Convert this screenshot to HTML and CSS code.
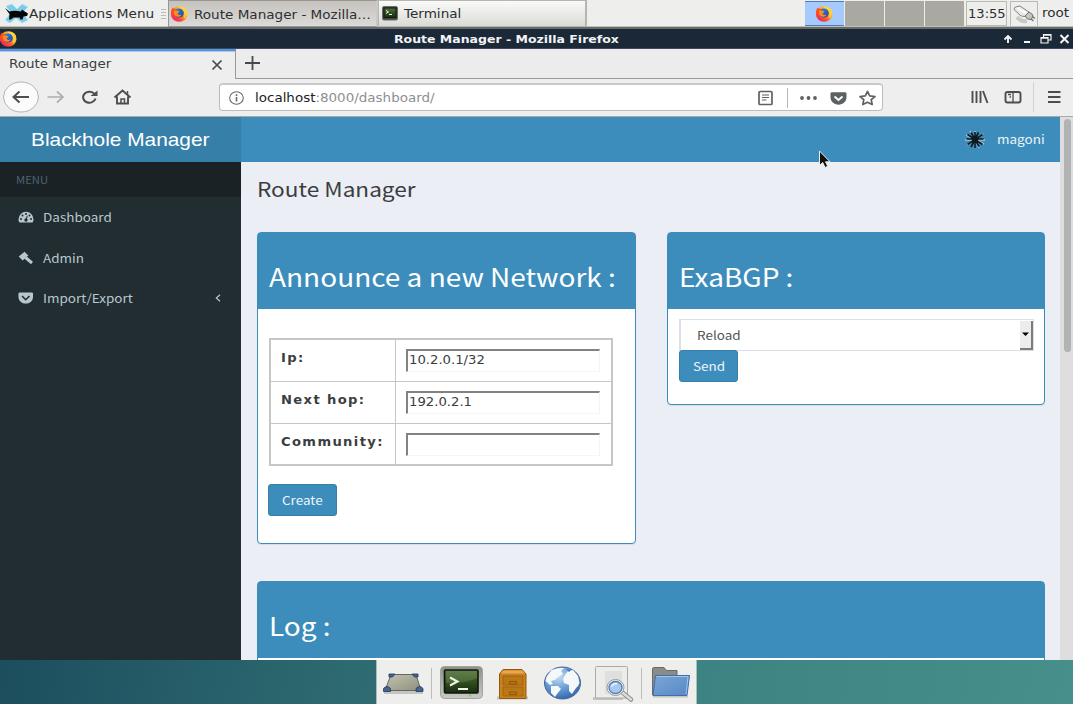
FILE: index.html
```
<!DOCTYPE html>
<html lang="en">
<head>
<meta charset="utf-8">
<title>Route Manager</title>
<link rel="stylesheet" href="styles.css">
</head>
<body>
<svg class="defs" width="0" height="0">
  <defs>
    <linearGradient id="fxo" x1="1" y1="0" x2="0.1" y2="1"><stop offset="0" stop-color="#fff04a"/><stop offset=".4" stop-color="#ffa51f"/><stop offset=".7" stop-color="#ff4a2d"/><stop offset="1" stop-color="#e0107c"/></linearGradient>
    <linearGradient id="fxb" x1="0" y1="0" x2="1" y2="1"><stop offset="0" stop-color="#1b8ff0"/><stop offset="1" stop-color="#2a3fa8"/></linearGradient>
    <linearGradient id="scr" x1="0" y1="0" x2="0" y2="1"><stop offset="0" stop-color="#53733a"/><stop offset=".5" stop-color="#32511f"/><stop offset="1" stop-color="#182c13"/></linearGradient>
    <linearGradient id="case" x1="0" y1="0" x2="0" y2="1"><stop offset="0" stop-color="#8d8f8a"/><stop offset="1" stop-color="#c9cac6"/></linearGradient>
    <linearGradient id="desk" x1="0" y1="0" x2="1" y2="1"><stop offset="0" stop-color="#c2c3b2"/><stop offset="1" stop-color="#8e907d"/></linearGradient>
    <radialGradient id="globe" cx=".4" cy=".3" r=".75"><stop offset="0" stop-color="#c8dcf2"/><stop offset=".5" stop-color="#6c9fd6"/><stop offset="1" stop-color="#2e62a8"/></radialGradient>
    <linearGradient id="fold" x1="0" y1="0" x2="1" y2="1"><stop offset="0" stop-color="#7ba7d9"/><stop offset="1" stop-color="#5688c4"/></linearGradient>
    <symbol id="firefox" viewBox="0 0 18 16">
      <ellipse cx="9.2" cy="8" rx="8.3" ry="7.7" fill="url(#fxo)"/>
      <path d="M1 7C1 4 2 2 3 1.400L4 3.300C5.500 2.500 7 3 8 4L6 7Z" fill="#ff4b22"/>
      <ellipse cx="9" cy="7" rx="4.800" ry="4.500" fill="url(#fxb)"/>
      <path d="M4 4.600C6.500 3.500 8 5 9.500 5.300C9 7 7.500 6.700 7.700 7.800C8.200 9.500 10.500 9 11.500 8.500C10.500 11.700 5 11.800 4 7.500Z" fill="#ff8a1d"/>
      <path d="M8.500 1.300C11 0 15 1 16.800 4.500C17.500 9 15.500 12 13.500 13C15.500 9 14.500 5 12 3.300C11 2.300 9.800 2.500 8.500 1.300Z" fill="#ffd43a"/>
    </symbol>
    <symbol id="pocket" viewBox="0 0 18 14">
      <path d="M2 .5H16Q17.500 .5 17.500 2V5.500C17.500 10.500 13.500 13.500 9 13.500S.5 10.500 .5 5.500V2Q.5 .5 2 .5Z" fill="currentColor"/>
    </symbol>
  </defs>
</svg>

<header class="taskbar">
  <div class="appmenu">
    <svg class="mouse" width="25" height="21" viewBox="0 0 25 21"><path d="M2 3L8 1L13 6L18 1L24 4L18 10L24 17L18 20L12 15L6 20L1 17L7 10Z" fill="#79cdea" stroke="#b5e3f2" stroke-width=".8"/><path d="M1 5L5.500 8.500Q11 7 17 8.500L18 6.500L20 8L24 10.500L23 13L19.500 13.500L18.500 16.500H16.500L15.500 14.500H9.500L7 16.500H5L5.500 11Z" fill="#050505"/></svg>
    <span class="dv dv-menu">Applications Menu</span>
    <i class="grip"></i>
  </div>
  <div class="task active"><svg class="fx" width="18" height="16"><use href="#firefox"/></svg><span class="dv">Route Manager - Mozilla…</span></div>
  <div class="task second"><svg width="16" height="15" viewBox="0 0 16 15"><rect x=".5" y=".5" width="15" height="13.500" rx="1.500" fill="#42453f" stroke="#6a6c67"/><rect x="2" y="2" width="12" height="9.500" fill="url(#scr)" stroke="#15180f"/><path d="M4 4.500L6.500 6L4 7.500M7 8.500H10" fill="none" stroke="#f1f5e9"/></svg><span class="dv">Terminal</span></div>
  <div class="pager"><b><svg width="18" height="16"><use href="#firefox"/></svg></b><b></b><b></b><b></b></div>
  <div class="clock"><span class="dv dv-narrow">13:55</span></div>
  <div class="tray"><svg width="24" height="22" viewBox="0 0 24 22"><path d="M5 13Q9 18 15 17" stroke="#c9c9c5" stroke-width="4" fill="none"/><path d="M2 5.500Q2 3 5 2.500L8 2L17 8L13 12.500L9 12Z" fill="#e9e9e6" stroke="#858582"/><path d="M5 4L14 9" stroke="#fff" stroke-width="1.800"/><path d="M13 12L17 8L21 11L19.500 15.500L15.500 15Z" fill="#c4c4c0" stroke="#6e6e6b"/><path d="M19 15L21.500 17M20.500 12.500L23 14.500" stroke="#777" stroke-width="1.500"/></svg></div>
  <span class="dv user">root</span>
</header>

<div class="titlebar">
  <svg class="fxt" width="18" height="16"><use href="#firefox"/></svg>
  <span class="dv dv-title">Route Manager - Mozilla Firefox</span>
  <svg class="winbtns" width="70" height="14" viewBox="0 0 70 14" fill="none" stroke="#f4f4f4"><path d="M8 11V4M4.500 7.500L8 4L11.500 7.500" stroke-width="1.900"/><path d="M24 10H30" stroke-width="2"/><path d="M41 5.500H48V11H41ZM43.500 5V2.500H51V8H48.500" stroke-width="1.200"/><path d="M41 6H48M43.500 3H51" stroke-width="1.500"/><path d="M60.500 3L68.500 11M68.500 3L60.500 11" stroke-width="2"/></svg>
</div>

<div class="tabs">
  <div class="tab"><span class="dv dv-tab">Route Manager</span><svg width="12" height="12" viewBox="0 0 12 12"><path d="M1.500 1.500L10.500 10.500M10.500 1.500L1.500 10.500" stroke="#474b4e" stroke-width="1.700"/></svg></div>
  <div class="tabrest"><svg width="16" height="14" viewBox="0 0 16 14"><path d="M7.500 0V14M0 7H15" stroke="#45494c" stroke-width="1.800"/></svg></div>
</div>

<div class="toolbar">
  <svg class="nav" width="140" height="36" viewBox="0 0 140 36" fill="none" stroke="#4a4e51" stroke-width="2">
    <ellipse cx="21" cy="18" rx="17.500" ry="15" fill="#fbfbfb" stroke="#b4b4b4" stroke-width="1"/>
    <path d="M29 18H14M19.500 12.500L13.500 18L19.500 23.500"/>
    <path d="M47.500 18H62M57 12.500L63 18L57 23.500" stroke="#adafb0" stroke-width="1.700"/>
    <path d="M95.500 19.500A6.300 5.500 0 1 1 94 14.500"/><path d="M97.500 11.500V17H90.500Z" fill="#4a4e51" stroke="none"/>
    <path d="M114.500 18.500L122.500 11.500L130.500 18.500M117 17.500V24.500H128V17.500" stroke-width="1.900"/><path d="M121 24V20H124.500V24" stroke-width="1.500"/><path d="M127.500 12V15" stroke-width="1.500"/>
  </svg>
  <div class="urlbar">
    <svg width="15" height="14" viewBox="0 0 15 14" fill="none" stroke="#66696b"><ellipse cx="7.500" cy="7" rx="6.800" ry="6.200" stroke-width="1.100"/><path d="M7.500 6V10.500M7.500 3.300V4.900" stroke-width="1.600"/></svg>
    <span class="dv url"><em>localhost</em>:8000/dashboard/</span>
    <svg class="urlicons" width="122" height="22" viewBox="0 0 122 22" fill="none" stroke="#5e6163"><rect x="3" y="4.500" width="13" height="13" rx="1" stroke-width="1.700"/><path d="M6 8H13M6 10.500H13M6 13H10.500" stroke-width="1.100"/><path d="M31.500 1V21" stroke="#b7b7b7"/><g fill="#5e6163" stroke="none"><circle cx="46" cy="11" r="1.900"/><circle cx="52.500" cy="11" r="1.900"/><circle cx="59" cy="11" r="1.900"/></g><svg x="74" y="4.500" width="17" height="14" color="#5e6163" stroke="none"><use href="#pocket"/></svg><path d="M78.500 9.500L82.500 13L86.500 9.500" stroke="#fff" stroke-width="1.900"/><path d="M111.500 4.500L113.700 8.800L119 9.500L115.200 12.700L116.200 17.500L111.500 15.200L106.800 17.500L107.800 12.700L104 9.500L109.300 8.800Z" stroke-width="1.700" stroke-linejoin="round"/></svg>
  </div>
  <svg class="rightbtns" width="100" height="36" viewBox="0 0 100 36" fill="none" stroke="#4a4e51"><path d="M3.500 12V24M7.500 12V24M11.500 12V24M14 12L18.500 24" stroke-width="1.900"/><rect x="36.500" y="13" width="15" height="10.500" rx="2" stroke-width="1.900"/><path d="M44 13V23.500M39 15.500H42M40.500 18H42" stroke-width="1.300"/><path d="M64.500 3V33" stroke="#d2d2d2"/><path d="M79 13H91.500M79 18H91.500M79 23H91.500" stroke-width="1.800"/></svg>
</div>

<main class="page">
  <aside class="sidebar">
    <div class="logo"><span>Blackhole Manager</span></div>
    <div class="menuhead"><span class="ss ss-small">MENU</span></div>
    <a class="item"><svg width="16" height="12" viewBox="0 0 16 12"><path d="M.5 8.500A7.500 7.700 0 0 1 15.500 8.500Q15.500 10.300 14.500 11.500H1.500Q.5 10.300 .5 8.500Z" fill="#b8c7ce"/><g fill="#222d32"><circle cx="3" cy="8" r="1"/><circle cx="4.500" cy="4.500" r="1"/><circle cx="8" cy="3" r="1"/><circle cx="11.500" cy="4.500" r="1"/><circle cx="13" cy="8" r="1"/><circle cx="8" cy="9" r="1.700"/></g><path d="M8 9L9.300 4.800" stroke="#222d32"/></svg><span class="ss">Dashboard</span></a>
    <a class="item"><svg width="16" height="14" viewBox="0 0 16 14"><path d="M.7 5.500L6.500 .8L10.300 4.500L4.700 9.500Z" fill="#b8c7ce"/><path d="M7.500 6.500L14 12" stroke="#b8c7ce" stroke-width="3"/></svg><span class="ss">Admin</span></a>
    <a class="item"><svg width="16" height="12" viewBox="0 0 16 12"><svg width="15.500" height="12" color="#b8c7ce"><use href="#pocket"/></svg><path d="M4 4L7.700 7.700L11.500 4" fill="none" stroke="#222d32" stroke-width="1.600"/></svg><span class="ss">Import/Export</span><svg class="chev" width="6" height="8" viewBox="0 0 6 8"><path d="M5 .7L1.300 4L5 7.300" fill="none" stroke="#b8c7ce" stroke-width="1.200"/></svg></a>
  </aside>
  <section class="content">
    <div class="navbar">
      <svg width="22" height="19" viewBox="0 0 22 19"><g stroke="#a9c3d2" stroke-width="1.600"><path d="M2 5L20 14M6 1L15 18M19 4L3 15M1 10H21M11 1V18"/></g><g stroke="#0c1a22" stroke-width="1.700"><path d="M3.500 4.500L18.500 14.500M7 2.500L15 16.500M18.500 4.500L3.500 14.500M2.500 9H19.500M11 2V18M14.500 2.500L7 17"/></g><circle cx="11" cy="9.500" r="3" fill="#0c1a22"/></svg>
      <span class="ss">magoni</span>
    </div>
    <div class="body">
      <h1><span class="ss">Route Manager</span></h1>
      <div class="row">
        <div class="panel announce">
          <div class="phead"><span class="ss">Announce a new Network :</span></div>
          <div class="pbody">
            <div class="form">
              <div class="cell label"><span>Ip:</span></div><div class="cell"><div class="inp"><span class="dv dv-in">10.2.0.1/32</span></div></div>
              <div class="cell label"><span>Next hop:</span></div><div class="cell"><div class="inp"><span class="dv dv-in">192.0.2.1</span></div></div>
              <div class="cell label"><span>Community:</span></div><div class="cell"><div class="inp"></div></div>
            </div>
            <button class="btn create"><span class="ss">Create</span></button>
          </div>
        </div>
        <div class="panel exabgp">
          <div class="phead"><span class="ss">ExaBGP :</span></div>
          <div class="pbody">
            <div class="select"><span class="ss">Reload</span><i><svg width="7" height="4" viewBox="0 0 7 4"><path d="M0 .5H7L3.500 4Z" fill="#000"/></svg></i></div>
            <button class="btn send"><span class="ss">Send</span></button>
          </div>
        </div>
      </div>
      <div class="panel log"><div class="phead"><span class="ss">Log :</span></div></div>
    </div>
  </section>
  <div class="scroll"><i></i></div>
</main>

<footer class="desktop">
  <div class="dock">
    <svg width="320" height="44" viewBox="0 0 320 44">
      <path d="M7 32.500H46" stroke="#c4c4c2" stroke-width="3"/>
      <path d="M14 14.500H39L44 30.500H8Z" fill="url(#desk)" stroke="#66685c"/><g fill="#46628f" stroke="#27375a" stroke-width=".8"><path d="M12 17V14H18L15.500 17ZM35 14H41V17H37.500Z"/><path d="M6.500 31.500V28.500Q10 24.500 13.500 28.500V31.500ZM39 31.500V28.500Q42.500 24.500 46 28.500V31.500Z"/></g>
      <path d="M54.500 8V39M264.500 8V39" stroke="#bcbcb9"/>
      <rect x="63.500" y="6.500" width="42" height="32" rx="4" fill="url(#case)" stroke="#a2a39f"/><rect x="67.500" y="10" width="33.500" height="23" rx="1" fill="url(#scr)" stroke="#10160c" stroke-width="1.600"/><path d="M69 11H100V18Q88 24 69 23Z" fill="#7b9864" opacity=".35"/><path d="M73 17.500L80.500 21.500L73 25.500M81 29H91" fill="none" stroke="#eef4e6" stroke-width="2"/><circle cx="93" cy="35.500" r="1.200" fill="#82d53e"/>
      <path d="M120 38H151" stroke="#c6c6c4" stroke-width="3"/><path d="M122.500 14L126 9.500H145L149 14V38.500H122.500Z" fill="#c98222" stroke="#935908"/><path d="M123.500 13.500L126.500 10.500H145L148 13.500Z" fill="#eba653"/><path d="M126 16H146V25H126ZM126 27H146V36H126Z" fill="#bb7716" stroke="#a4650d"/><path d="M132.500 24V21.500H139.500V24H132.500M132.500 34.500V32H139.500V34.500H132.500" fill="none" stroke="#8b5409"/>
      <ellipse cx="185.500" cy="23" rx="18" ry="16" fill="url(#globe)" stroke="#47659a"/><g fill="#f5f8fb"><path d="M169.500 17L174.500 10L182 8L187 8L184 11L186 14L181 17L178 20L174 21L176 24L173 25L168.500 21Z"/><path d="M174 26L181 26L184 29L180 34L178 37L174 33Z"/><path d="M188 15L191 11L196 10L201 16L202.500 23L201 26L199 28L195 34L192 31L192 25L187 23L186 19Z"/></g><path d="M189 9L194 10L192 12Z" fill="#3e71b4"/>
      <path d="M216 38.500H246" stroke="#c4c4c2" stroke-width="3"/><rect x="218.500" y="6.500" width="32" height="31.500" rx="1" fill="#ececea" stroke="#aaaaa8"/><path d="M228 11H245V34H228Z" fill="#dfdfdd"/><path d="M246 33L254 39.500" stroke="#8e908f" stroke-width="4.500" stroke-linecap="round"/><path d="M246 33L254 39.500" stroke="#dcdcda" stroke-width="2.500" stroke-linecap="round"/><ellipse cx="238.500" cy="27.500" rx="8.500" ry="8" fill="#eff1f2" stroke="#969997"/><ellipse cx="238.500" cy="27.500" rx="6.500" ry="6" fill="#a9c8ea" stroke="#5480ba" stroke-width="1.400"/><path d="M234.500 26.500Q236 23.500 240 23.500" fill="none" stroke="#eaf4ff" stroke-width="1.500"/>
      <path d="M275.500 33V9Q275.500 7.500 277 7.500H287L289.500 10.500H300V17H281L278 35H275.500Z" fill="#8a8c89" stroke="#696b68"/><path d="M276 36.500H311" stroke="#c4c4c2" stroke-width="2"/><path d="M278.500 15.500H312.500L310 35.500H276Z" fill="url(#fold)" stroke="#3f6ea8"/><path d="M279.500 16.500H311L309 34.500" fill="none" stroke="#a3c3e8"/>
    </svg>
  </div>
</footer>

<svg class="pointer" width="14" height="20" viewBox="0 0 14 20"><path d="M1.500 1V15.500L4.700 12.500L7 17.500L9.800 16.300L7.500 11.800H12Z" fill="#111" stroke="#e8eef2" stroke-width="1"/></svg>
</body>
</html>
```
FILE: styles.css
```
* { box-sizing: border-box; }
body { margin: 0; width: 1073px; height: 704px; overflow: hidden; display: flex; flex-direction: column; background: #ececec; font: 12px/16px "DejaVu Sans", sans-serif; color: #3a3e40; }
.defs { position: absolute; }
svg { display: block; flex: none; }

/* Wide text: every face is stretched horizontally from its left edge */
.dv, .ss { display: inline-block; white-space: pre; transform-origin: 0 50%; transform: scaleX(1.13); }
.ss { font-family: "Noto Sans CJK SC", "Noto Sans", sans-serif; font-size: 12px; transform: scaleX(1.125); }

.taskbar { height: 29px; flex: none; display: flex; align-items: flex-start; background: #eeeeec; border-bottom: 2px solid #666b69; box-shadow: inset 0 -1px #bfc0ba; color: #2c2f30; }
.appmenu { width: 168px; height: 27px; display: flex; align-items: center; padding-left: 4px; }
.mouse { margin-right: 0; }
.dv-menu { font-size: 12.3px; width: 132px; transform: scaleX(1.11); }
.grip { width: 5px; height: 10px; background: repeating-linear-gradient(#b9b9b5 0 1px, transparent 1px 3px); }
.task { height: 27px; display: flex; align-items: center; border: 1px solid #b5b6b0; background: linear-gradient(#fafaf9, #dadbd5); }
.task.active { width: 210px; padding-left: 1px; background: linear-gradient(#c5c2be, #dcdad8); border: 1px solid #979692; border-right: 2px solid #c9c9c5; }
.task.active .dv { margin: 2px 0 0 6px; }
.task.second { width: 209px; padding-left: 3px; border-right: 2px solid #b5b6b0; }
.task.second .dv { margin-left: 6px; }
.pager { display: flex; gap: 1px; margin: 1px 0 0 218px; }
.pager b { width: 39px; height: 25px; background: #a9a9a1; display: flex; align-items: center; justify-content: center; }
.pager b:first-child { background: #a6cafb; border: solid #4a7dc0; border-width: 1px 0; }
.pager svg { margin-left: -2px; }
.clock { width: 41px; height: 25px; margin: 1px 0 0 2px; border: 1px solid #b9bab3; padding: 4px 0 0 1px; }
.dv-narrow { transform: scaleX(1.09); }
.tray { width: 28px; height: 26px; margin: 1px 0 0 3px; border: 1px solid #b9bab3; padding: 2px 1px; }
.user { margin: 5px 0 0 4px; }

.titlebar { height: 20px; flex: none; display: flex; align-items: center; background: #1b2838; color: #f2f3f4; border-bottom: 1px solid #41495a; }
.fxt { margin: 1px 0 0 -1px; }
.dv-title { font-weight: bold; font-size: 11px; width: 586px; margin: 3px 0 0 377px; transform: scaleX(1.135); }
.winbtns { margin: 1px 0 0 20px; }

.tabs { height: 30px; flex: none; display: flex; }
.tab { width: 236px; border-top: 2px solid #5294dd; border-right: 1px solid #999; background: #eeeeee; display: flex; align-items: center; padding: 0 12px 2px 9px; justify-content: space-between; box-shadow: inset 0 1px #a9c9ec; }
.tab svg { margin-top: 1px; }
.dv-tab { transform: scaleX(1.12); }
.tabrest { flex: 1; border-bottom: 1px solid #999; padding: 7px 0 0 9px; }

.toolbar { height: 38px; flex: none; display: flex; align-items: center; background: #eeeeee; border-bottom: 1px solid #a9a9a9; padding-bottom: 1px; }
.nav { margin-right: 79px; }
.urlbar { width: 664px; height: 28px; display: flex; align-items: center; background: #fff; border: 1px solid #bcbcbc; border-top: 2px solid #cacaca; border-radius: 4px; padding-left: 9px; }
.url { width: 494px; margin-left: 11px; color: #8d8f90; transform: scaleX(1.122); }
.url em { font-style: normal; color: #202324; }
.urlicons { margin-left: 7px; }
.rightbtns { margin-left: 86px; }

.page { height: 543px; flex: none; display: flex; background: #ecf0f5; }
.sidebar { width: 241px; background: #222d32; color: #b8c7ce; }
.logo { height: 45px; background: #367fa9; color: #fff; padding: 11px 0 0 31px; font: 18.500px/24px "Liberation Sans", Arial, sans-serif; }
.logo span { display: inline-block; white-space: pre; transform: scaleX(1.127); transform-origin: 0 50%; }
.menuhead { height: 35px; background: #1a2226; color: #4b646f; padding: 10px 0 0 16px; }
.ss-small { font-size: 10px; }
.item { height: 40.4px; display: flex; align-items: center; padding-left: 18px; }
.item .ss { margin-left: 9px; }
.chev { margin-left: 92px; }
.content { width: 819px; display: flex; flex-direction: column; background: #ebeef4; }
.navbar { height: 45px; flex: none; background: #3c8dbc; color: #ecf3f8; display: flex; align-items: center; padding-left: 723px; }
.navbar .ss { margin: -1px 0 0 11px; }
.body { flex: 1; overflow: hidden; padding: 0 15px 0 16px; }
h1 { margin: 0; height: 70px; padding-top: 14px; font-weight: 400; line-height: 26px; color: #3a3d40; }
h1 .ss { font-size: 20px; transform: scaleX(1.13); }
.row { display: flex; gap: 31px; align-items: flex-start; height: 349px; }
.panel { flex: none; background: #fff; border: 1px solid #3c8dbc; border-radius: 4px; box-shadow: 0 1px 1px rgba(0,0,0,.08); width: 378px; }
.announce { height: 312px; width: 379px; }
.exabgp { height: 173px; width: 378px; }
.log { width: 788px; height: 90px; }
.phead { height: 76px; background: #3c8dbc; color: #fff; padding: 25px 0 0 11px; line-height: 36px; }
.phead .ss { font-size: 25px; transform: scaleX(1.12); }
.pbody { padding: 29px 10px 0; }
.form { width: 344px; height: 128px; display: grid; grid-template-columns: 124px 1fr; grid-template-rows: 41px 41px 1fr; gap: 1px; padding: 2px; background: #c6c6c6; margin-left: 1px; }
.cell { background: #fff; padding: 9px 0 0 10px; }
.label span { display: inline-block; white-space: pre; transform: scaleX(1.14); transform-origin: 0 50%; font-weight: bold; font-size: 11.5px; letter-spacing: 1.2px; margin-top: 1px; }
.inp { width: 194px; height: 23px; border: solid; border-width: 2px 1px 1px 2px; border-color: #828282 #f3f3f3 #f6f6f6 #828282; padding: 1px 0 0 1px; }
.dv-in { transform: scaleX(1.1); }
.btn { display: block; height: 32px; border: 1px solid #367fa9; border-radius: 3px; background: #3c8dbc; color: #eef5fa; text-align: left; padding: 0 0 0 13px; line-height: 18px; }
.create { width: 69px; margin-top: 18px; }
.exabgp .pbody { padding-top: 10px; }
.select { width: 355px; height: 32px; border: 1px solid #dcdfe8; border-width: 1px 1px 1px 2px; display: flex; align-items: center; justify-content: space-between; padding: 0 0 0 16px; color: #555; }
.select i { width: 13px; height: 29px; background: #ececec; border: solid #7b7b7b; border-width: 0 2px 2px 0; display: flex; align-items: center; justify-content: center; }
.send { width: 59px; margin-top: -1px; }
.exabgp .pbody { padding-left: 11px; }
.scroll { width: 13px; background: #dedede; padding: 2px 2px 0 4px; }
.scroll i { display: block; width: 7px; height: 233px; border-radius: 4px; background: #b1b3b5; }

.desktop { height: 44px; flex: none; background: linear-gradient(100deg, #1c4e5e 0, #2f6c72 35%, #3d8383 65%, #468f8a 100%); display: flex; padding-left: 376px; }
.dock { width: 321px; background: #eeeeec; border: solid #a9bdbd; border-width: 0 1px; }
.pointer { position: absolute; left: 818px; top: 150px; }
```
